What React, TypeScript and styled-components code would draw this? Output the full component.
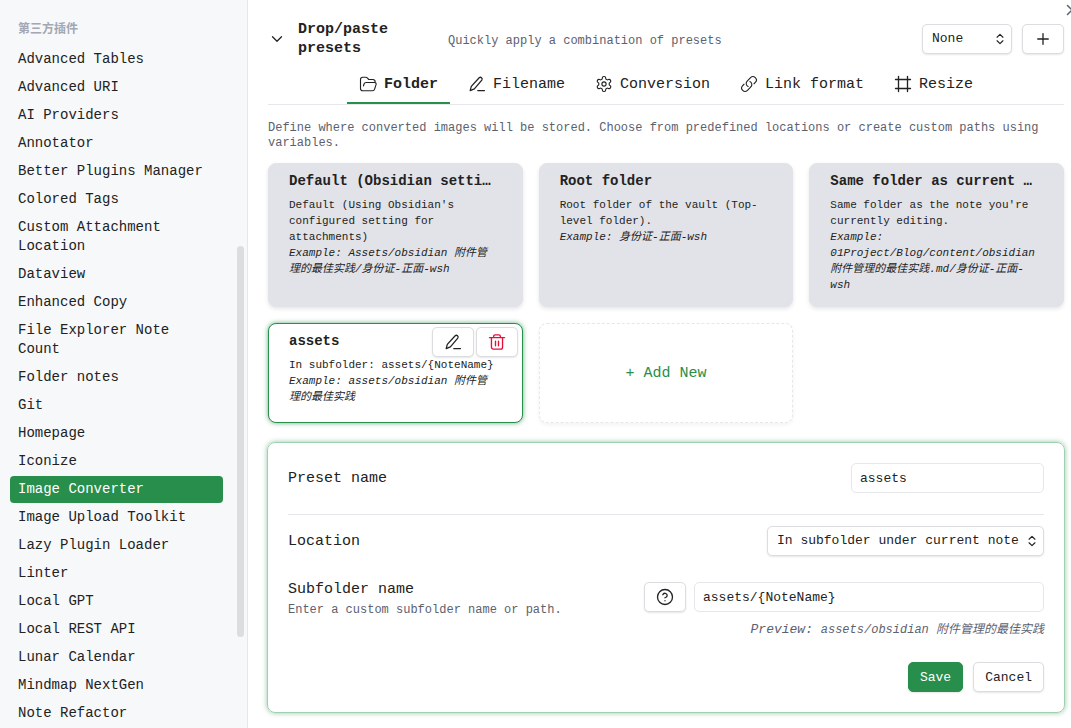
import React, { useState } from 'react';
import styled, { createGlobalStyle, css } from 'styled-components';
import { ChevronDown, ChevronsUpDown, CircleHelp, Frame, Plus, X } from 'lucide-react';

const color = {
  text: '#222222',
  muted: '#5c6170',
  faint: '#a3a7b3',
  accent: '#278e4b',
  danger: '#e4103c',
  border: '#e6e7ea',
  control: '#dcdde0',
  card: '#e2e3e8',
  sidebar: '#f6f8fa',
};

const GlobalStyle = createGlobalStyle`
  *, *::before, *::after { box-sizing: border-box; }
  body {
    margin: 0;
    overflow: hidden;
    color: ${color.text};
    background: #ffffff;
    font-family: 'Liberation Mono', 'Noto Sans CJK SC', monospace;
    font-size: 15px;
  }
  button, input, select { font: inherit; color: inherit; margin: 0; }
  button { cursor: pointer; }
`;

/* ---------- shell ---------- */

const Shell = styled.div`
  display: flex;
  height: 100vh;
  position: relative;
  overflow: hidden;
`;

const Sidebar = styled.aside`
  position: relative;
  flex: 0 0 248px;
  overflow: hidden;
  padding: 20px 24px 0 10px;
  background: ${color.sidebar};
  border-right: 1px solid ${color.border};
`;

const SidebarTitle = styled.h2`
  margin: 0 0 6px;
  padding: 0 8px;
  font-size: 12px;
  line-height: 20px;
  font-weight: 600;
  color: ${color.faint};
`;

const NavList = styled.ul`
  display: flex;
  flex-direction: column;
  gap: 1px;
  margin: 0;
  padding: 0;
  list-style: none;
`;

const NavLink = styled.a<{ $active?: boolean }>`
  display: block;
  padding: 4px 8px;
  border-radius: 4px;
  font-size: 14px;
  line-height: 19px;
  text-decoration: none;
  color: ${(p) => (p.$active ? '#ffffff' : color.text)};
  background: ${(p) => (p.$active ? color.accent : 'transparent')};
`;

const ScrollThumb = styled.div`
  position: absolute;
  top: 246px;
  right: 3px;
  width: 7px;
  height: 391px;
  border-radius: 4px;
  background: #dcdddf;
`;

const Main = styled.main`
  flex: 1;
  min-width: 0;
  overflow: hidden;
  padding: 20px 7px 15px 20px;
`;

const CloseButton = styled.button`
  position: absolute;
  top: 1px;
  right: -10px;
  display: flex;
  padding: 0;
  border: 0;
  background: none;
  color: ${color.muted};
`;

/* ---------- shared controls ---------- */

const controlBox = css`
  height: 30px;
  border: 1px solid ${color.control};
  border-radius: 5px;
  background: #ffffff;
  font-size: 13px;
  box-shadow: 0 1px 2px rgba(0, 0, 0, 0.1);
`;

const Button = styled.button<{ $tone?: 'primary' | 'danger' }>`
  ${controlBox}
  display: inline-flex;
  align-items: center;
  justify-content: center;
  padding: 0 11px;
  ${(p) =>
    p.$tone === 'primary' &&
    css`
      background: ${color.accent};
      border-color: ${color.accent};
      color: #ffffff;
    `}
  ${(p) =>
    p.$tone === 'danger' &&
    css`
      color: ${color.danger};
    `}
`;

const IconButton = styled(Button)`
  flex: none;
  width: 42px;
  padding: 0;
`;

const SelectWrap = styled.div`
  position: relative;
  display: flex;
  flex: none;

  svg {
    position: absolute;
    top: 8px;
    right: 5px;
    pointer-events: none;
  }
`;

const SelectBox = styled.select<{ $compact?: boolean }>`
  ${controlBox}
  appearance: none;
  width: ${(p) => (p.$compact ? '90px' : 'auto')};
  padding: 0 24px 2px 9px;
`;

const TextInput = styled.input<{ $wide?: boolean }>`
  width: ${(p) => (p.$wide ? '350px' : '193px')};
  height: 30px;
  padding: 0 8px;
  border: 1px solid ${color.border};
  border-radius: 5px;
  background: #ffffff;
  font-size: 13px;
`;

/* ---------- header ---------- */

const Header = styled.header`
  display: flex;
  align-items: center;
  height: 38px;
`;

const Collapse = styled.button`
  display: flex;
  flex: none;
  width: 30px;
  padding: 0;
  border: 0;
  background: none;
`;

const HeaderTitle = styled.h1`
  flex: none;
  width: 150px;
  margin: 0;
  font-size: 15px;
  line-height: 19px;
  font-weight: 700;
`;

const HeaderNote = styled.p`
  flex: 1;
  margin: 0;
  padding-top: 4px;
  font-size: 12px;
  line-height: 16px;
  color: ${color.muted};
`;

const HeaderActions = styled.div`
  display: flex;
  gap: 10px;
`;

/* ---------- tabs ---------- */

const TabBar = styled.div`
  display: flex;
  justify-content: center;
  gap: 6px;
  height: 47px;
  border-bottom: 1px solid ${color.border};
`;

const Tab = styled.button<{ $active?: boolean }>`
  display: flex;
  align-items: center;
  gap: 7px;
  padding: 8px 12px 0;
  border: 0;
  border-bottom: 2px solid ${(p) => (p.$active ? color.accent : 'transparent')};
  background: none;
  font-weight: ${(p) => (p.$active ? 700 : 400)};
  white-space: nowrap;
`;

const Intro = styled.p`
  margin: 16px 0 12px;
  font-size: 12px;
  line-height: 15px;
  color: ${color.muted};
`;

/* ---------- preset cards ---------- */

const CardGrid = styled.div`
  display: grid;
  grid-template-columns: repeat(3, minmax(0, 1fr));
  gap: 16px;
`;

const Card = styled.div<{ $selected?: boolean }>`
  position: relative;
  display: flex;
  min-height: 100px;
  border: 1px solid ${(p) => (p.$selected ? color.accent : color.card)};
  border-radius: 8px;
  background: ${(p) => (p.$selected ? '#ffffff' : color.card)};
  box-shadow: ${(p) =>
    p.$selected ? '0 0 5px rgba(39, 142, 75, 0.7)' : '0 2px 4px rgba(0, 0, 0, 0.1)'};
`;

const CardBody = styled.button`
  display: flex;
  flex: 1;
  flex-direction: column;
  align-items: stretch;
  gap: 7px;
  min-width: 0;
  padding: 8px 26px 13px 20px;
  border: 0;
  background: none;
  text-align: left;
`;

const CardTitle = styled.span`
  overflow: hidden;
  font-size: 14px;
  line-height: 18px;
  font-weight: 700;
  white-space: nowrap;
  text-overflow: ellipsis;
`;

const CardText = styled.span`
  font-size: 11px;
  line-height: 16px;

  em {
    display: block;
  }
`;

const CardActions = styled.div`
  position: absolute;
  top: 3px;
  right: 4px;
  display: flex;
  gap: 2px;
`;

const AddCard = styled.button`
  border: 1px dashed ${color.border};
  border-radius: 8px;
  background: #ffffff;
  box-shadow: 0 2px 4px rgba(0, 0, 0, 0.05);
  color: ${color.accent};
`;

/* ---------- editor ---------- */

const Editor = styled.form`
  display: flex;
  flex-direction: column;
  margin: 19px -1px 0;
  padding: 20px;
  border: 1px solid #9fd0b0;
  border-radius: 8px;
  box-shadow: 0 0 5px rgba(39, 142, 75, 0.5);
`;

const Row = styled.div<{ $divided?: boolean }>`
  display: flex;
  align-items: center;
  justify-content: space-between;
  padding-bottom: ${(p) => (p.$divided ? '21px' : '26px')};
  margin-bottom: ${(p) => (p.$divided ? '11px' : '0')};
  border-bottom: ${(p) => (p.$divided ? `1px solid ${color.border}` : '0')};
`;

const FieldLabel = styled.label`
  display: block;
  padding-top: 2px;
  line-height: 20px;
`;

const FieldNote = styled.p`
  margin: 2px 0 0;
  font-size: 12px;
  line-height: 16px;
  color: ${color.muted};
`;

const FieldControls = styled.div`
  display: flex;
  gap: 8px;
`;

const SubfolderRow = styled.div`
  display: flex;
  align-items: flex-start;
  justify-content: space-between;
  margin-top: -4px;

  ${FieldControls} {
    padding-top: 4px;
  }
`;

const Preview = styled.p`
  margin: 2px 0 0;
  text-align: right;
  font-size: 13px;
  line-height: 20px;
  font-style: italic;
  color: ${color.muted};

  small {
    font-size: 12px;
  }
`;

const Footer = styled.div`
  display: flex;
  justify-content: flex-end;
  gap: 10px;
  margin-top: 22px;
`;

/* ---------- icons ---------- */

const iconProps = {
  width: 18,
  height: 18,
  viewBox: '0 0 24 24',
  fill: 'none',
  stroke: 'currentColor',
  strokeWidth: 1.5,
  strokeLinecap: 'round' as const,
  strokeLinejoin: 'round' as const,
  'aria-hidden': true,
};

const FolderIcon = () => (
  <svg {...iconProps}>
    <path d="M21.5 10V9a3 3 0 0 0-3-3H13l-2-2.2A3 3 0 0 0 9 3H5a3 3 0 0 0-3 3v12a3 3 0 0 0 3 3h13a3 3 0 0 0 2.8-2.2l2-6.3A2 2 0 0 0 21 10H9.5a3 3 0 0 0-2.8 2L6 14.5" />
  </svg>
);

const PenIcon = () => (
  <svg {...iconProps} strokeWidth={1.7}>
    <path d="M13 20.8h9" />
    <path d="M14.9 3.6a2.4 2.4 0 0 1 3.5 3.2L8.5 18.4l-5.6 2.4 1.5-5.6Z" />
  </svg>
);

const GearIcon = () => (
  <svg {...iconProps}>
    <path d="M12.22 2h-.44a2 2 0 0 0-2 2v.18a2 2 0 0 1-1 1.73l-.43.25a2 2 0 0 1-2 0l-.15-.08a2 2 0 0 0-2.73.73l-.22.38a2 2 0 0 0 .73 2.73l.15.1a2 2 0 0 1 1 1.72v.51a2 2 0 0 1-1 1.74l-.15.09a2 2 0 0 0-.73 2.73l.22.38a2 2 0 0 0 2.73.73l.15-.08a2 2 0 0 1 2 0l.43.25a2 2 0 0 1 1 1.73V20a2 2 0 0 0 2 2h.44a2 2 0 0 0 2-2v-.18a2 2 0 0 1 1-1.73l.43-.25a2 2 0 0 1 2 0l.15.08a2 2 0 0 0 2.73-.73l.22-.39a2 2 0 0 0-.73-2.73l-.15-.08a2 2 0 0 1-1-1.74v-.5a2 2 0 0 1 1-1.74l.15-.09a2 2 0 0 0 .73-2.73l-.22-.38a2 2 0 0 0-2.73-.73l-.15.08a2 2 0 0 1-2 0l-.43-.25a2 2 0 0 1-1-1.73V4a2 2 0 0 0-2-2z" />
    <circle cx="12" cy="12" r="2.8" />
  </svg>
);

const ChainIcon = () => (
  <svg {...iconProps}>
    <path d="M13.19 8.688a4.5 4.5 0 0 1 1.242 7.244l-4.5 4.5a4.5 4.5 0 0 1-6.364-6.364l1.757-1.757m13.35-.622 1.757-1.757a4.5 4.5 0 0 0-6.364-6.364l-4.5 4.5a4.5 4.5 0 0 0 1.242 7.244" />
  </svg>
);

const TrashIcon = () => (
  <svg {...iconProps} strokeWidth={1.8}>
    <path d="M2 6.2h20M7.5 6V4.5a2 2 0 0 1 2-2h5a2 2 0 0 1 2 2V6" />
    <path d="M4.6 6.2V19a2.5 2.5 0 0 0 2.5 2.5h9.8a2.5 2.5 0 0 0 2.5-2.5V6.2M10 11v6M14 11v6" />
  </svg>
);

/* ---------- data ---------- */

const plugins = [
  'Advanced Tables',
  'Advanced URI',
  'AI Providers',
  'Annotator',
  'Better Plugins Manager',
  'Colored Tags',
  'Custom Attachment Location',
  'Dataview',
  'Enhanced Copy',
  'File Explorer Note Count',
  'Folder notes',
  'Git',
  'Homepage',
  'Iconize',
  'Image Converter',
  'Image Upload Toolkit',
  'Lazy Plugin Loader',
  'Linter',
  'Local GPT',
  'Local REST API',
  'Lunar Calendar',
  'Mindmap NextGen',
  'Note Refactor',
];

const tabs = [
  { name: 'Folder', icon: <FolderIcon /> },
  { name: 'Filename', icon: <PenIcon /> },
  { name: 'Conversion', icon: <GearIcon /> },
  { name: 'Link format', icon: <ChainIcon /> },
  { name: 'Resize', icon: <Frame size={18} strokeWidth={1.75} /> },
];

const presets = [
  {
    title: 'Default (Obsidian setting)',
    text: "Default (Using Obsidian's configured setting for attachments)",
    example: 'Example: Assets/obsidian 附件管理的最佳实践/身份证-正面-wsh',
  },
  {
    title: 'Root folder',
    text: 'Root folder of the vault (Top-level folder).',
    example: 'Example: 身份证-正面-wsh',
  },
  {
    title: 'Same folder as current note',
    text: "Same folder as the note you're currently editing.",
    example: 'Example: 01Project/Blog/content/obsidian 附件管理的最佳实践.md/身份证-正面-wsh',
  },
  {
    title: 'assets',
    text: 'In subfolder: assets/{NoteName}',
    example: 'Example: assets/obsidian 附件管理的最佳实践',
    custom: true,
  },
];

export default function App() {
  const [tab, setTab] = useState('Folder');
  const [selected, setSelected] = useState('assets');

  return (
    <Shell>
      <GlobalStyle />
      <Sidebar>
        <SidebarTitle>第三方插件</SidebarTitle>
        <nav aria-label="第三方插件">
          <NavList>
            {plugins.map((name) => (
              <li key={name}>
                <NavLink href="#" $active={name === 'Image Converter'}>
                  {name}
                </NavLink>
              </li>
            ))}
          </NavList>
        </nav>
        <ScrollThumb />
      </Sidebar>

      <Main>
        <Header>
          <Collapse type="button" aria-label="Collapse">
            <ChevronDown size={18} strokeWidth={1.75} />
          </Collapse>
          <HeaderTitle>Drop/paste presets</HeaderTitle>
          <HeaderNote>Quickly apply a combination of presets</HeaderNote>
          <HeaderActions>
            <SelectWrap>
              <SelectBox $compact aria-label="Preset combination" defaultValue="None">
                <option>None</option>
              </SelectBox>
              <ChevronsUpDown size={14} strokeWidth={2} />
            </SelectWrap>
            <IconButton type="button" aria-label="Add">
              <Plus size={18} strokeWidth={1.75} />
            </IconButton>
          </HeaderActions>
        </Header>

        <TabBar role="tablist">
          {tabs.map(({ name, icon }) => (
            <Tab
              key={name}
              type="button"
              role="tab"
              aria-selected={tab === name}
              $active={tab === name}
              onClick={() => setTab(name)}
            >
              {icon}
              {name}
            </Tab>
          ))}
        </TabBar>

        <Intro>
          Define where converted images will be stored. Choose from predefined locations or create
          custom paths using variables.
        </Intro>

        <CardGrid>
          {presets.map((preset) => (
            <Card key={preset.title} $selected={selected === preset.title}>
              <CardBody type="button" onClick={() => setSelected(preset.title)}>
                <CardTitle>{preset.title}</CardTitle>
                <CardText>
                  {preset.text}
                  <em>{preset.example}</em>
                </CardText>
              </CardBody>
              {preset.custom && (
                <CardActions>
                  <IconButton type="button" aria-label="Edit">
                    <PenIcon />
                  </IconButton>
                  <IconButton type="button" $tone="danger" aria-label="Delete">
                    <TrashIcon />
                  </IconButton>
                </CardActions>
              )}
            </Card>
          ))}
          <AddCard type="button">+ Add New</AddCard>
        </CardGrid>

        <Editor onSubmit={(e) => e.preventDefault()}>
          <Row $divided>
            <FieldLabel htmlFor="preset-name">Preset name</FieldLabel>
            <TextInput id="preset-name" defaultValue="assets" />
          </Row>
          <Row>
            <FieldLabel htmlFor="location">Location</FieldLabel>
            <SelectWrap>
              <SelectBox id="location" defaultValue="In subfolder under current note">
                <option>In subfolder under current note</option>
              </SelectBox>
              <ChevronsUpDown size={14} strokeWidth={2} />
            </SelectWrap>
          </Row>
          <SubfolderRow>
            <div>
              <FieldLabel htmlFor="subfolder">Subfolder name</FieldLabel>
              <FieldNote>Enter a custom subfolder name or path.</FieldNote>
            </div>
            <FieldControls>
              <IconButton type="button" aria-label="Help">
                <CircleHelp size={18} strokeWidth={1.75} />
              </IconButton>
              <TextInput id="subfolder" $wide defaultValue="assets/{NoteName}" />
            </FieldControls>
          </SubfolderRow>
          <Preview>
            Preview: <small>assets/obsidian 附件管理的最佳实践</small>
          </Preview>
          <Footer>
            <Button type="submit" $tone="primary">
              Save
            </Button>
            <Button type="button">Cancel</Button>
          </Footer>
        </Editor>
      </Main>

      <CloseButton type="button" aria-label="Close">
        <X size={18} strokeWidth={2} />
      </CloseButton>
    </Shell>
  );
}
